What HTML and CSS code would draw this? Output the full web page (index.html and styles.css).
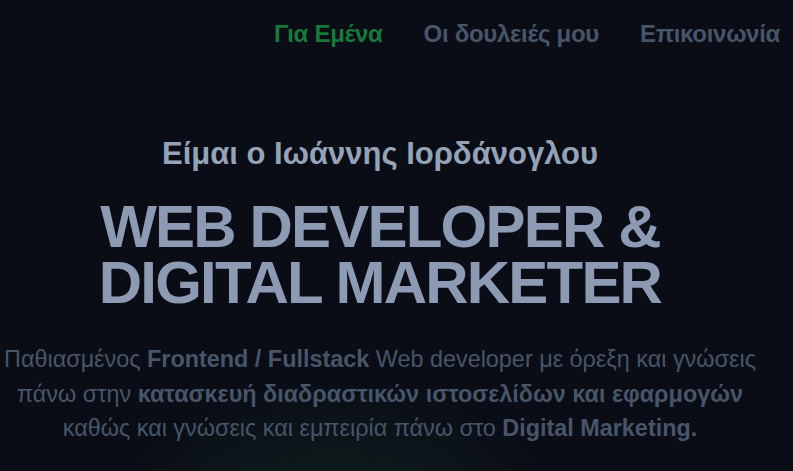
FILE: index.html
```html
<!DOCTYPE html>
<html lang="el">
<head>
<meta charset="utf-8">
<title>Ιωάννης Ιορδάνογλου</title>
<link rel="stylesheet" href="styles.css">
</head>
<body>
<div class="page">
  <header class="nav">
    <a class="nav-link active" href="#about">Για Εμένα</a>
    <a class="nav-link" href="#work">Οι δουλειές μου</a>
    <a class="nav-link" href="#contact">Επικοινωνία</a>
  </header>
  <section class="hero">
    <h2 class="hero-sub">Είμαι ο Ιωάννης Ιορδάνογλου</h2>
    <h1 class="hero-title">WEB DEVELOPER &amp;<br>DIGITAL MARKETER</h1>
    <p class="hero-text">Παθιασμένος <strong>Frontend / Fullstack</strong> Web developer με όρεξη και γνώσεις πάνω στην <strong>κατασκευή διαδραστικών ιστοσελίδων και εφαρμογών</strong> καθώς και γνώσεις και εμπειρία πάνω στο <strong>Digital Marketing.</strong></p>
  </section>
</div>
</body>
</html>
```
FILE: styles.css
```css
html, body {
  margin: 0;
  padding: 0;
  height: 100%;
}
body {
  background: #0a0d16;
  font-family: "Liberation Sans", Arial, sans-serif;
  overflow: hidden;
}
.page {
  min-height: 100%;
  background: radial-gradient(ellipse 230px 140px at 335px 520px, rgba(24, 90, 50, 0.26), rgba(10, 13, 22, 0) 100%);
}
.nav {
  display: flex;
  justify-content: flex-end;
  gap: 41px;
  padding: 19px 13px 0 0;
}
.nav-link {
  font-size: 24px;
  line-height: 30px;
  font-weight: 700;
  color: #475569;
  text-decoration: none;
  letter-spacing: -0.3px;
}
.nav-link.active {
  color: #17793a;
}
.hero {
  width: 760px;
  text-align: center;
  padding-top: 87px;
}
.hero-sub {
  margin: 0;
  font-size: 31px;
  line-height: 36px;
  font-weight: 700;
  color: #94a3b8;
}
.hero-title {
  margin: 27px 0 0;
  font-size: 60px;
  line-height: 56px;
  font-weight: 700;
  color: #8d9ab3;
  letter-spacing: -1.8px;
}
.hero-text {
  margin: 31px 0 0;
  font-size: 23.4px;
  line-height: 34.5px;
  color: #475569;
}
.hero-text strong {
  font-weight: 700;
}
```
